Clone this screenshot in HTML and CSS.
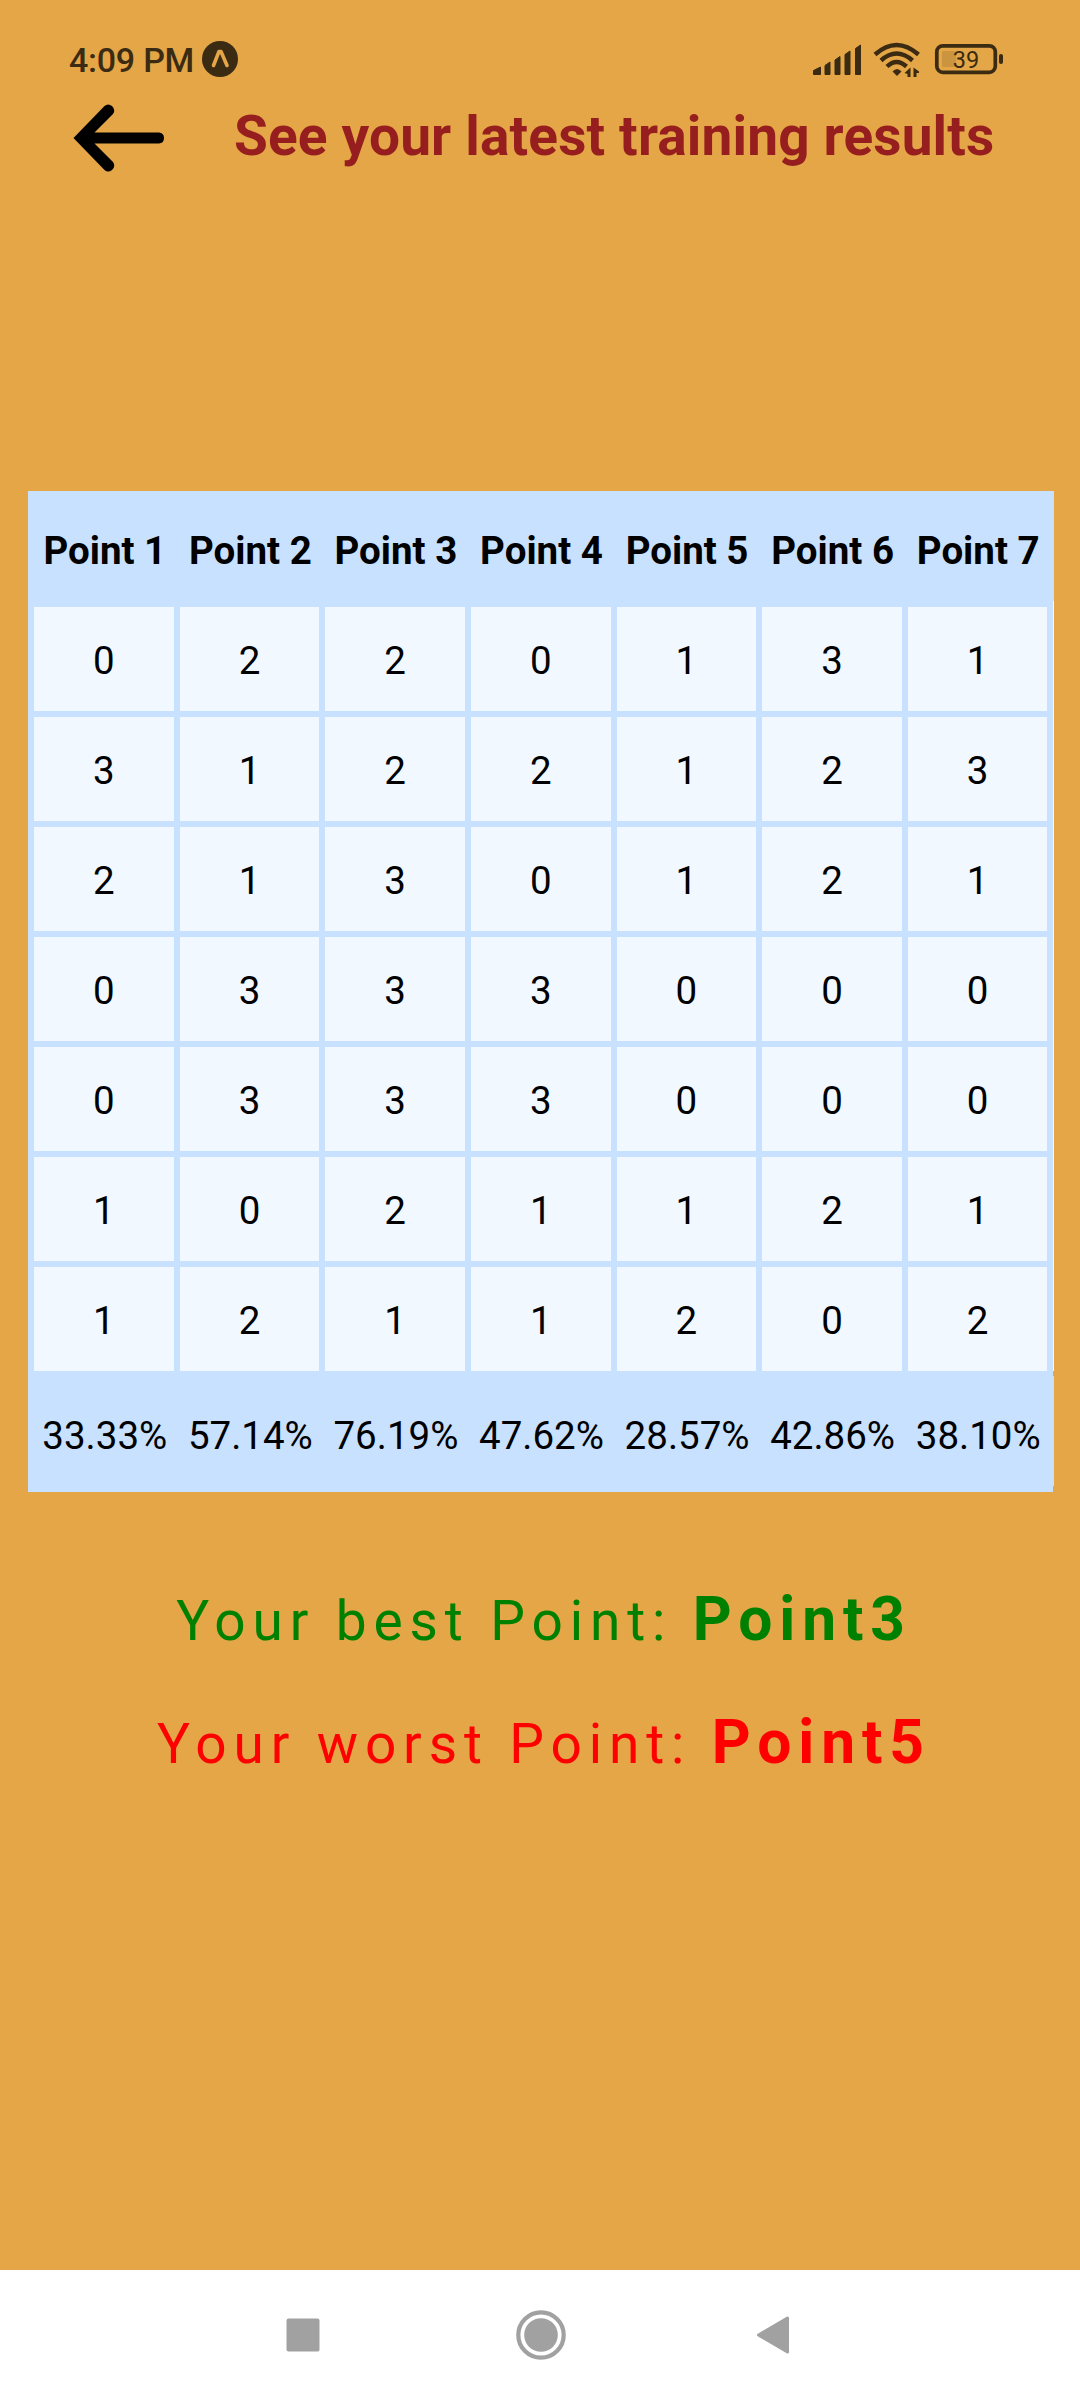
FILE: index.html
```html
<!DOCTYPE html>
<html lang="en">
<head>
<meta charset="utf-8">
<title>Training results</title>
<link rel="stylesheet" href="styles.css">
</head>
<body>
<div class="screen">
  <div class="status">
    <span class="clock">4:09 PM</span>
    <svg class="expo" width="36" height="36" viewBox="0 0 36 36"><circle cx="18" cy="18" r="18" fill="#3a2b12"/><path d="M11.500 24.500L17 10.500H19L25 24.500" fill="none" stroke="#e4a646" stroke-width="3.600" stroke-linecap="round" stroke-linejoin="round"/></svg>
    <svg class="system" width="194" height="36" viewBox="812 42 194 36" fill="#3a2b12">
      <path d="M813.500 70.500L820.500 67V74.500H813.500Z M825 65.500L830 62V74.500H825Z M835 60L840 56.500V74.500H835Z M845 54.500L850 51V74.500H845Z M855.500 48.500L860.500 45V74.500H855.500Z" stroke="#3a2b12" stroke-width="1" stroke-linejoin="round"/>
      <g fill="none" stroke="#3a2b12" stroke-width="4.400"><path d="M875 54.500Q896.500 35.500 918.500 54.500"/><path d="M881 60.500Q896.500 46.500 912.500 60.500"/><path d="M887 66.500Q896.500 57.500 906.500 66.500"/></g>
      <path d="M892.500 71.500Q897 66.500 901.500 71.500L897 76Z"/>
      <path d="M910.500 67.500V77H907.500V74L904.500 73ZM913.500 77V67.500L919 71.500V73H916.500V77Z"/>
      <rect x="942" y="51" width="14" height="16" rx="2" fill="#cb953f"/>
      <rect x="936.800" y="45.800" width="58.500" height="26.500" rx="6" fill="none" stroke="#3a2b12" stroke-width="3.700"/>
      <rect x="999" y="54" width="4" height="10" rx="2"/>
      <text x="966" y="67.500" class="charge">39</text>
    </svg>
  </div>
  <div class="heading">
    <svg class="back" width="92" height="68" viewBox="0 0 92 68"><path d="M0.500 34L31.500 2Q35-1 39 2Q43 6 40 10L21.500 28.500H86Q91 29 91 34Q91 39 86 39.500H21.500L40 58Q43 62 39 66Q35 69 31.500 66Z"/></svg>
    <h1 class="title">See your latest training results</h1>
  </div>
  <div class="table">
    <div class="row head"><b>Point 1</b><b>Point 2</b><b>Point 3</b><b>Point 4</b><b>Point 5</b><b>Point 6</b><b>Point 7</b></div>
    <div class="cells">
      <span>0</span><span>2</span><span>2</span><span>0</span><span>1</span><span>3</span><span>1</span>
      <span>3</span><span>1</span><span>2</span><span>2</span><span>1</span><span>2</span><span>3</span>
      <span>2</span><span>1</span><span>3</span><span>0</span><span>1</span><span>2</span><span>1</span>
      <span>0</span><span>3</span><span>3</span><span>3</span><span>0</span><span>0</span><span>0</span>
      <span>0</span><span>3</span><span>3</span><span>3</span><span>0</span><span>0</span><span>0</span>
      <span>1</span><span>0</span><span>2</span><span>1</span><span>1</span><span>2</span><span>1</span>
      <span>1</span><span>2</span><span>1</span><span>1</span><span>2</span><span>0</span><span>2</span>
    </div>
    <div class="row foot"><span>33.33%</span><span>57.14%</span><span>76.19%</span><span>47.62%</span><span>28.57%</span><span>42.86%</span><span>38.10%</span></div>
  </div>
  <p class="result best">Your best Point: <b>Point3</b></p>
  <p class="result worst">Your worst Point: <b>Point5</b></p>
  <div class="nav">
    <svg width="34" height="34" viewBox="0 0 34 34"><rect x=".5" y=".5" width="33" height="33" rx="2" fill="#a1a1a1"/></svg>
    <svg class="home" width="50" height="50" viewBox="0 0 50 50"><circle cx="25" cy="25" r="22.700" fill="none" stroke="#a1a1a1" stroke-width="4.200"/><circle cx="25" cy="25" r="16.800" fill="#a1a1a1"/></svg>
    <svg width="34" height="38" viewBox="0 0 34 38"><path d="M2.500 19L31.500 2V36Z" fill="#a1a1a1" stroke="#a1a1a1" stroke-width="3" stroke-linejoin="round"/></svg>
  </div>
</div>
</body>
</html>
```

FILE: styles.css
```css
* { box-sizing: border-box; }
body { margin: 0; font-family: Roboto, sans-serif; }
svg { display: block; flex: none; }
.screen {
  width: 1080px;
  height: 2400px;
  display: flex;
  flex-direction: column;
  background: #e4a646;
  overflow: hidden;
}
.status {
  height: 103px;
  padding: 41px 74px 0 69px;
  display: flex;
  align-items: flex-start;
  color: #3a2b12;
}
.clock {
  width: 133px;
  font-size: 34px;
  line-height: 38px;
  font-weight: 500;
  letter-spacing: -0.250px;
  white-space: nowrap;
}
.system { margin: 1px 0 0 auto; }
.charge { font-size: 23.500px; text-anchor: middle; }
.heading {
  height: 388px;
  padding: 1px 0 0 73px;
  display: flex;
  align-items: flex-start;
}
.title {
  margin: 0 0 0 69px;
  font-size: 55px;
  line-height: 64px;
  font-weight: 700;
  letter-spacing: 0.150px;
  color: #961e1e;
  white-space: nowrap;
}
.table {
  width: 1026px;
  height: 1001px;
  margin-left: 28px;
  flex: none;
  background: linear-gradient(#f1f8ff, #f1f8ff) 1025px 110px / 1px 770px no-repeat,
              linear-gradient(#c8e1ff, #c8e1ff) 0 0 / 1025px 100% no-repeat,
              linear-gradient(#c8e1ff, #c8e1ff) 1025px 0 / 1px 110px no-repeat,
              linear-gradient(#c8e1ff, #c8e1ff) 1025px 885px / 1px 110px no-repeat;
  font-size: 38.500px;
  line-height: 45px;
  color: #000;
}
.row {
  display: grid;
  grid-template-columns: repeat(7, 1fr);
  padding: 2px 3px 0 4px;
  align-items: center;
  text-align: center;
  white-space: nowrap;
}
.head { height: 116px; }
.foot { height: 116px; margin-top: 5px; }
.cells {
  display: grid;
  grid-template-columns: repeat(7, 1fr);
  grid-auto-rows: 104px;
  gap: 6px;
  padding: 0 6.500px 0 6px;
}
.cells span {
  padding-top: 31px;
  background: #f1f8ff;
  text-align: center;
}
.result {
  margin: 0;
  font-size: 55px;
  line-height: 72px;
  letter-spacing: 6.875px;
  text-align: center;
  padding-left: 8px;
  white-space: nowrap;
}
.result b { font-size: 60.500px; }
.best { color: #008000; margin-top: 92px; }
.worst { color: #ff0000; margin-top: 50px; }
.nav {
  height: 130px;
  margin-top: auto;
  padding: 0 290px 0 286px;
  display: flex;
  align-items: center;
  justify-content: space-between;
  background: #fff;
}
.home { margin-left: 5px; }
```
